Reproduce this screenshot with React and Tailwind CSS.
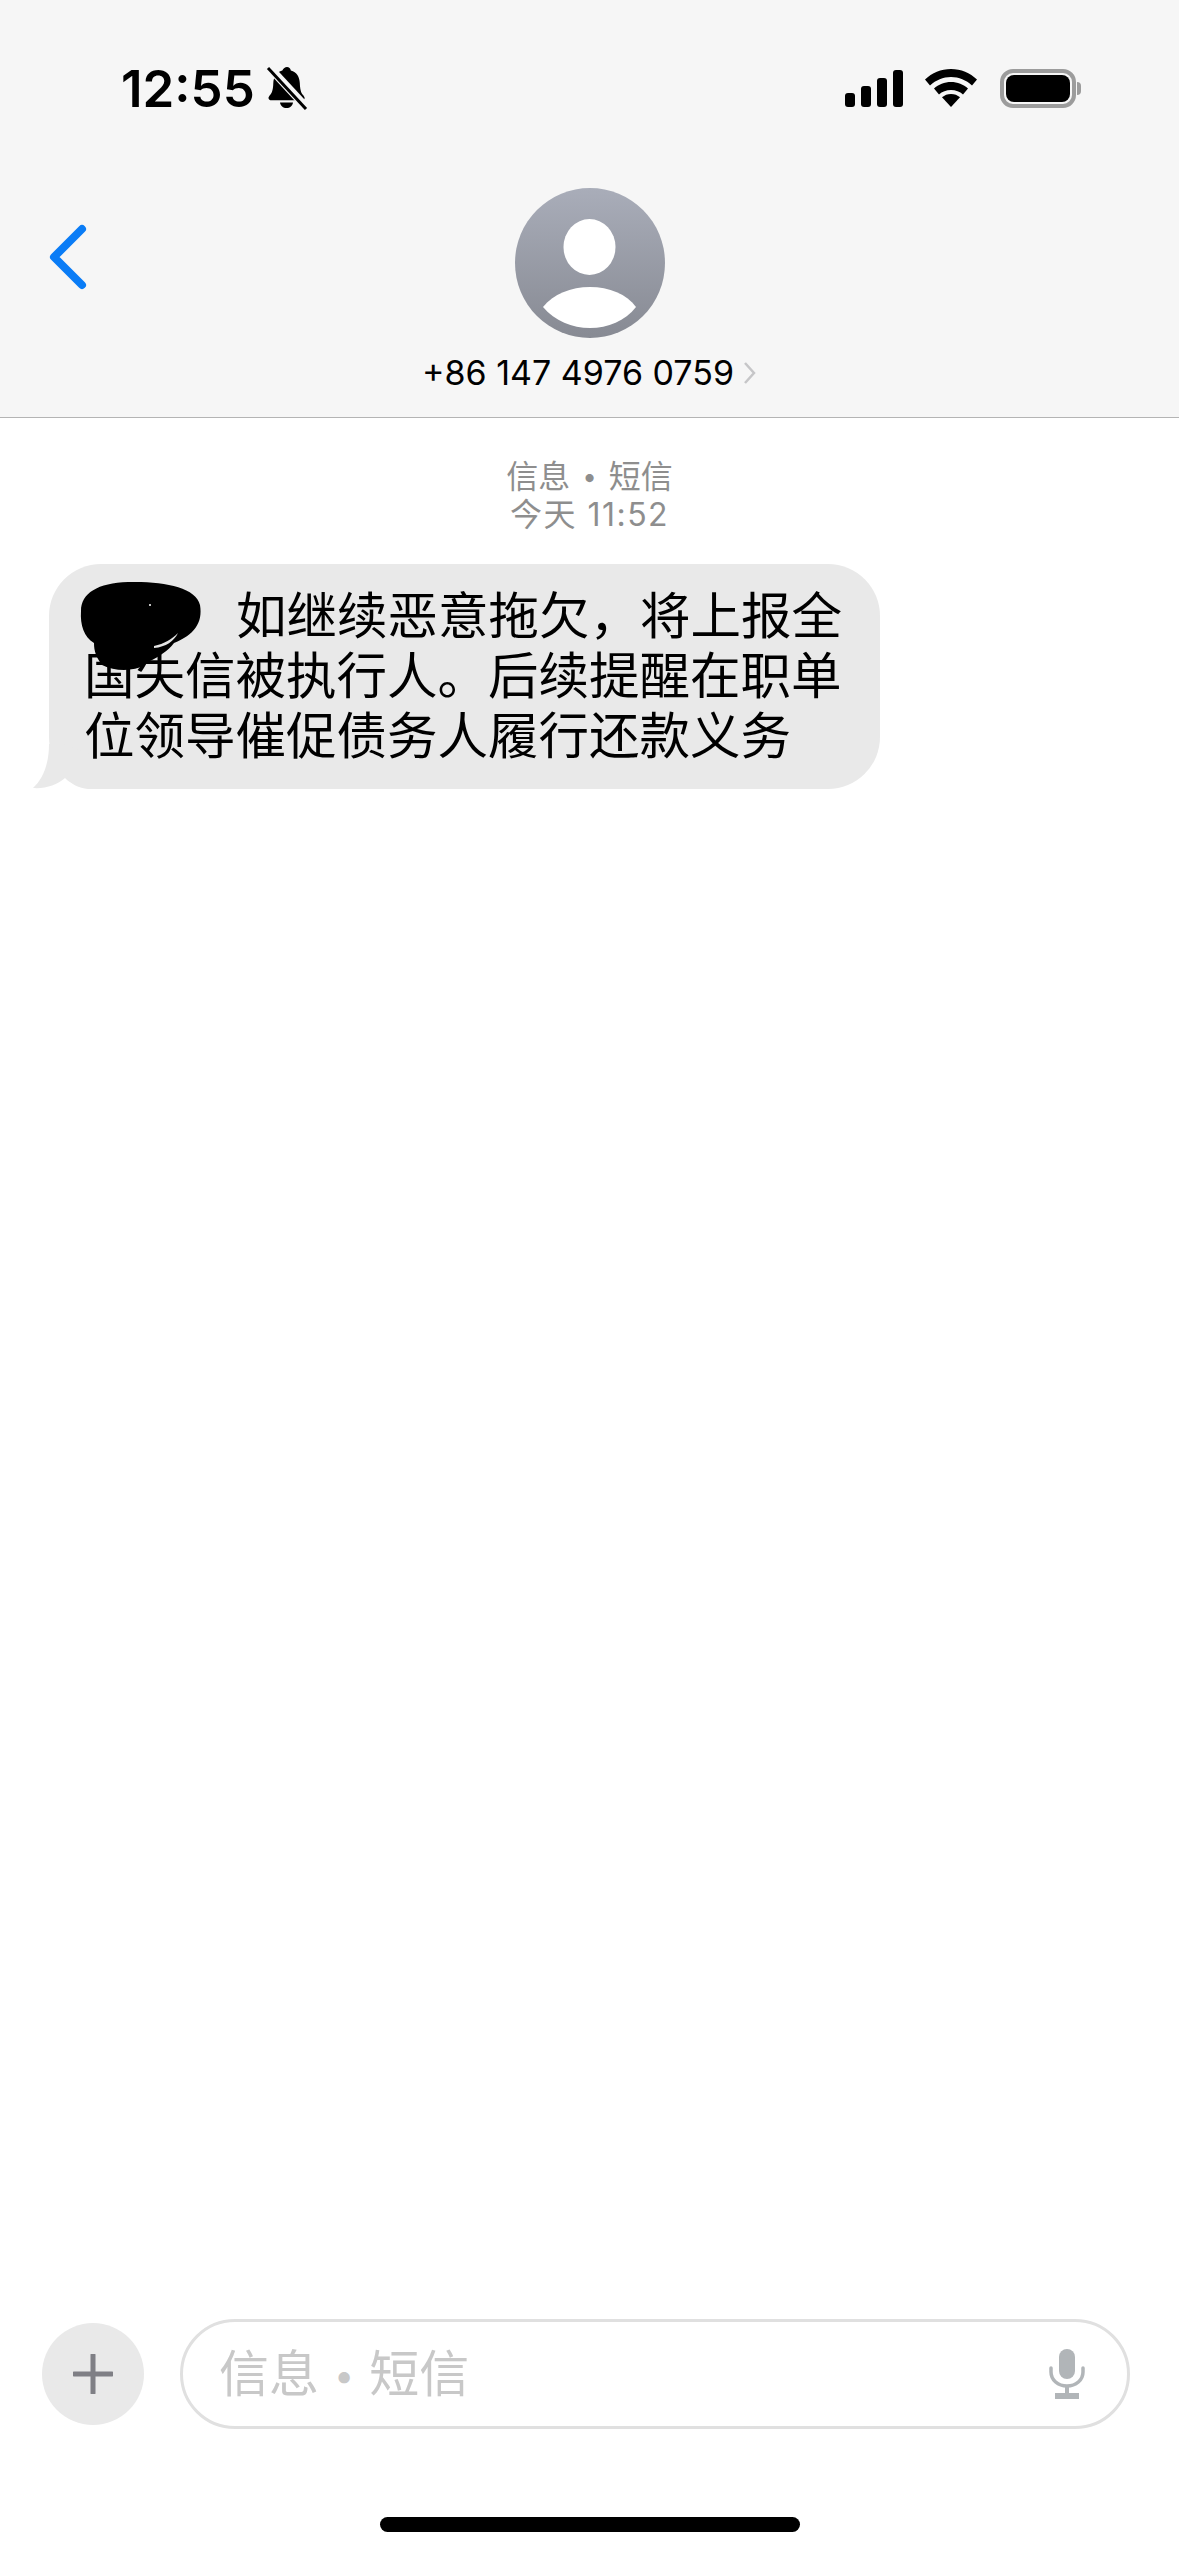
import React from "react";

const cjk = "font-['Inter','Noto_Sans_CJK_SC',sans-serif]";

function MutedBell() {
  return (
    <svg width="42" height="44" viewBox="0 0 40 44" className="ml-[11px]">
      <path d="M20 1c2 0 3.500 1.500 3.800 3.500 6 1.500 8.700 6.500 9 12.500.3 6 1 9.500 3.200 12 1 1.200 1.600 2.200 1.600 3 0 1.500-1 2.300-2.600 2.300H4.500C3 34.300 1.500 33.500 1.500 32c0-.8.600-1.800 1.600-3 2.200-2.500 3-6 3.200-12 .3-6 3.200-11 9-12.500C16.500 2.500 18 1 20 1z" fill="#000" />
      <path d="M13 36.500h13c-.5 3.500-3 5.500-6.500 5.500S13.500 40 13 36.500z" fill="#000" />
      <path d="M2 1l37 40" stroke="#f6f6f6" strokeWidth="8" />
      <path d="M1 2l38 41" stroke="#000" strokeWidth="3" />
    </svg>
  );
}

function StatusIcons() {
  return (
    <div className="flex items-center">
      <div className="flex items-end gap-[6px] h-[37px]">
        <div className="w-[10px] h-[14px] rounded-[3px] bg-black" />
        <div className="w-[10px] h-[21px] rounded-[3px] bg-black" />
        <div className="w-[10px] h-[29px] rounded-[3px] bg-black" />
        <div className="w-[10px] h-[37px] rounded-[3px] bg-black" />
      </div>
      <svg width="52" height="38" viewBox="0 0 52 38" className="ml-[22px]">
        <path d="M26 0c10 0 19 4 26 10.500l-5 6C41 11 34 8 26 8S11 11 5 16.500l-5-6C7 4 16 0 26 0z" fill="#000" />
        <path d="M26 13c6.500 0 12.500 2.500 17 6.500l-5 6c-3-2.800-7.500-4.500-12-4.500s-9 1.700-12 4.500l-5-6c4.500-4 10.500-6.500 17-6.500z" fill="#000" />
        <path d="M26 25c3.500 0 6.500 1.200 9 3.300L26 38l-9-9.700c2.500-2.100 5.500-3.300 9-3.300z" fill="#000" />
      </svg>
      <div className="ml-[23px] flex items-center">
        <div className="w-[76px] h-[39px] rounded-[13px] border-[4px] border-[#9c9c9c] p-[2px]">
          <div className="w-full h-full rounded-[8px] bg-black" />
        </div>
        <div className="ml-[1px] w-[4px] h-[13px] rounded-r-full bg-[#9c9c9c]" />
      </div>
    </div>
  );
}

function Avatar() {
  return (
    <svg width="150" height="150" viewBox="0 0 150 150">
      <defs>
        <linearGradient id="avatarFill" x1="0" y1="0" x2="0" y2="1">
          <stop offset="0" stopColor="#a9adb9" />
          <stop offset="1" stopColor="#878a93" />
        </linearGradient>
      </defs>
      <circle cx="75" cy="75" r="75" fill="url(#avatarFill)" />
      <ellipse cx="74.500" cy="59" rx="26" ry="28" fill="#fff" />
      <path d="M28 119C38 106 56 99 75 99C94 99 112 106 121 119C110 133 93 140 75 140C57 140 40 133 28 119Z" fill="#fff" />
    </svg>
  );
}

function Bubble() {
  return (
    <div className={`relative ml-[49px] w-[831px] h-[225px] rounded-[52px] bg-[#e9e9e9] pl-[35px] pt-[22px] text-[50.500px] leading-[60px] text-black ${cjk}`}>
      <svg width="70" height="50" viewBox="0 0 70 50" className="absolute left-[-16px] bottom-0">
        <path d="M16 5C16 25 10 40 0 49C12 50 24 46 32 39C38 45 46 49 55 50L70 50L70 20L30 5Z" fill="#e9e9e9" />
      </svg>
      <span className="block whitespace-nowrap relative">
        <span className="inline-block w-[152px]" />如继续恶意拖欠，将上报全
      </span>
      <span className="block whitespace-nowrap relative">国失信被执行人。后续提醒在职单</span>
      <span className="block whitespace-nowrap relative">位领导催促债务人履行还款义务</span>
      {/* scribbled out name */}
      <svg width="130" height="96" viewBox="0 0 130 96" className="absolute left-[29px] top-[17px]">
        <path d="M3 30C3 12 20 2 50 1C85 0 118 6 122 24C125 42 116 54 96 62C90 70 80 76 72 80C62 90 40 92 24 84C18 76 16 70 16 62C6 56 2 44 3 30Z" fill="#000" />
        <path d="M76 65C86 63 94 58 100 52C96 60 88 66 76 67Z" fill="#e4e4e4" />
        <circle cx="72" cy="24" r="1" fill="#fff" />
      </svg>
    </div>
  );
}

export default function App() {
  return (
    <div className={`w-[1179px] h-[2556px] flex flex-col bg-white overflow-hidden ${cjk}`}>
      {/* Header */}
      <div className="h-[418px] bg-[#f6f6f6] border-b border-[#b4b4b4] flex flex-col">
        <div className="flex items-center justify-between h-[44px] mt-[66px] pl-[121px] pr-[98px]">
          <div className="flex items-center">
            <span className="text-[51px] leading-none font-semibold text-black">12:55</span>
            <MutedBell />
          </div>
          <StatusIcons />
        </div>
        <div className="grid grid-cols-[1fr_auto_1fr] mt-[78px]">
          <div className="pl-[44px] pt-[34px]">
            <svg width="46" height="70" viewBox="0 0 46 70">
              <path d="M38 7L10 35L38 63" fill="none" stroke="#0a7cf6" strokeWidth="8" strokeLinecap="round" strokeLinejoin="round" />
            </svg>
          </div>
          <div className="flex flex-col items-center">
            <Avatar />
            <div className="mt-[15px] flex items-center text-[34px] leading-[40px] text-black">
              <span>+86 147 4976 0759</span>
              <svg width="14" height="24" viewBox="0 0 14 24" className="ml-[9px]">
                <path d="M2 2L11 12L2 22" fill="none" stroke="#c6c6c8" strokeWidth="2.500" />
              </svg>
            </div>
          </div>
          <div />
        </div>
      </div>

      {/* Messages */}
      <div className="flex-1">
        <div className="mt-[40px] flex flex-col items-center text-[32px] leading-[38px] text-[#8e8e8e]">
          <span>信息<span className="text-[26px] align-[2px] mx-[12px]">•</span>短信</span>
          <span className="tracking-[1.500px]">今天 11:52</span>
        </div>
        <div className="mt-[30px]">
          <Bubble />
        </div>
      </div>

      {/* Input bar */}
      <div className="flex items-center pl-[42px] pr-[49px] gap-[36px]">
        <div className="w-[102px] h-[102px] rounded-full bg-[#e9e9e9] flex items-center justify-center">
          <svg width="40" height="40" viewBox="0 0 40 40">
            <path d="M20 1V39M1 20H39" stroke="#7f7f85" strokeWidth="5" strokeLinecap="round" />
          </svg>
        </div>
        <div className="flex-1 h-[110px] rounded-full border-[3px] border-[#e0e0e0] flex items-center justify-between pl-[36px] pr-[42px]">
          <span className="text-[50px] leading-none text-[#c8c8c8]">信息<span className="text-[36px] align-[4px] mx-[15px]">•</span>短信</span>
          <svg width="36" height="50" viewBox="0 0 36 50">
            <rect x="10" y="0" width="16" height="30" rx="8" fill="#b1b5b8" />
            <path d="M2 19V23C2 31 9 37 18 37C27 37 34 31 34 23V19" fill="none" stroke="#b1b5b8" strokeWidth="3.500" strokeLinecap="round" />
            <path d="M18 37V45" stroke="#b1b5b8" strokeWidth="4" />
            <rect x="6" y="44" width="24" height="6" fill="#b1b5b8" />
          </svg>
        </div>
      </div>

      {/* Home indicator */}
      <div className="flex justify-center pt-[88px] pb-[24px]">
        <div className="w-[420px] h-[15px] rounded-full bg-black" />
      </div>
    </div>
  );
}
